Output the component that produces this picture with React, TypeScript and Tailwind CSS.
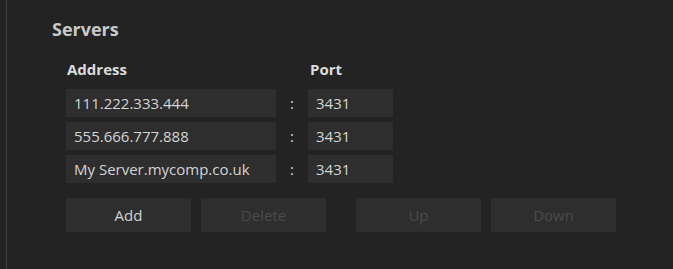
import React from 'react'

const rows = [
  { address: '111.222.333.444', port: '3431' },
  { address: '555.666.777.888', port: '3431' },
  { address: 'My Server.mycomp.co.uk', port: '3431' },
]

const font = { fontFamily: '"Open Sans", "Noto Sans", sans-serif' }

function Btn({ label, disabled = false }: { label: string; disabled?: boolean }) {
  return (
    <button
      className={`w-[125px] h-[34px] bg-[#2e2e2e] text-[15px] ${disabled ? 'text-[#4a4b4b]' : 'text-[#d2d2d2]'}`}
    >
      {label}
    </button>
  )
}

export default function App() {
  return (
    <div className="w-[673px] h-[269px] bg-[#222322] flex" style={font}>
      <div className="w-[6px] shrink-0" />
      <div className="w-px bg-[#3d3e3e] shrink-0" />
      <div className="pl-[45px] pt-[16px] flex flex-col">
        <h2 className="text-[18px] font-bold text-[#c9c9c9] leading-[26px]">Servers</h2>
        <div className="pl-[14px] mt-[17px] flex flex-col">
          <div className="flex text-[15px] font-bold text-[#dcdcdc] leading-[20px] pl-px">
            <span className="w-[243px]">Address</span>
            <span>Port</span>
          </div>
          <div className="mt-[10px] flex flex-col gap-[5px]">
            {rows.map((r) => (
              <div key={r.address} className="flex items-center">
                <div className="w-[210px] h-[28px] bg-[#2e2e2e] pl-[8px] flex items-center text-[15px] text-[#d4d4d4]">
                  {r.address}
                </div>
                <span className="w-[32px] text-center text-[15px] text-[#d4d4d4]">:</span>
                <div className="w-[85px] h-[28px] bg-[#2e2e2e] pl-[8px] flex items-center text-[15px] text-[#d4d4d4]">
                  {r.port}
                </div>
              </div>
            ))}
          </div>
          <div className="mt-[15px] flex">
            <div className="flex gap-[10px]">
              <Btn label="Add" />
              <Btn label="Delete" disabled />
            </div>
            <div className="flex gap-[10px] ml-[30px]">
              <Btn label="Up" disabled />
              <Btn label="Down" disabled />
            </div>
          </div>
        </div>
      </div>
    </div>
  )
}
